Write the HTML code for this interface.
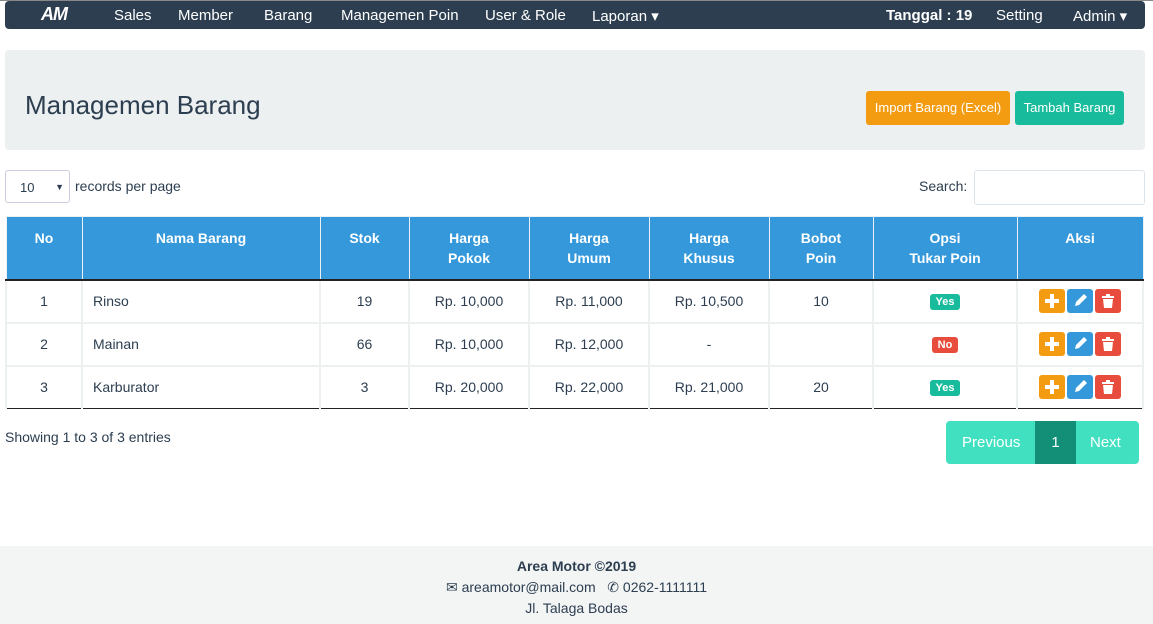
<!DOCTYPE html><html><head><style>
body{margin:0;width:1153px;height:624px;position:relative;font-family:"Liberation Sans",sans-serif;font-size:14px;color:#2c3e50;background:#fff;overflow:hidden}
.nav{position:absolute;left:5px;top:1px;width:1140px;height:28px;background:#2c3e50;border-radius:4px;color:#fff;font-size:15px}
.nav span{position:absolute;top:6px}
.jum{position:absolute;left:5px;top:50px;width:1140px;height:100px;background:#ecf0f1;border-radius:4px}
.btn{position:absolute;color:#fff;font-size:13px;text-align:center;line-height:34px;border-radius:3px;height:34px}
table{position:absolute;left:5px;top:216px;border-collapse:collapse;width:1139px}
th{background:#3498db;color:#fff;font-weight:bold;height:63px;vertical-align:top;padding-top:11px;box-sizing:border-box;line-height:20px;border:1px solid #ecf0f1;border-bottom:2px solid #222;font-size:14px}
td{height:43px;border:2px solid #ecf0f1;text-align:center;font-size:14px;padding:0;box-sizing:border-box}
tr:last-child td{border-bottom:1px solid #222}
.l{text-align:left;padding-left:10px}
.b{display:inline-block;color:#fff;font-size:11px;font-weight:bold;padding:2px 6px;border-radius:3px}
.ic{display:inline-block;width:26px;height:24px;border-radius:3px;margin:0 1px;vertical-align:middle;color:#fff;font-weight:bold;line-height:24px;font-size:18px}
.ic svg{display:block;margin:4px auto}
.foot{position:absolute;left:0;top:546px;width:1153px;height:78px;background:#f3f4f4;text-align:center;font-size:14px;line-height:21px;padding-top:10px;box-sizing:border-box}
</style></head><body>
<div style="position:absolute;left:0;top:0;width:1153px;height:1px;background:#888"></div>
<div class="nav">
<span style="left:36px;top:3px;font-weight:bold;font-style:italic;font-size:18px;letter-spacing:-1px">AM</span>
<span style="left:109px">Sales</span><span style="left:173px">Member</span><span style="left:259px">Barang</span><span style="left:336px">Managemen Poin</span><span style="left:480px">User &amp; Role</span><span style="left:587px">Laporan ▾</span>
<span style="left:881px;font-weight:bold">Tanggal : 19</span><span style="left:991px">Setting</span><span style="left:1068px">Admin ▾</span>
</div>
<div class="jum"><div style="position:absolute;left:20px;top:40px;font-size:26px">Managemen Barang</div>
<div class="btn" style="left:861px;top:41px;width:144px;background:#f39c12">Import Barang (Excel)</div>
<div class="btn" style="left:1010px;top:41px;width:109px;background:#18bc9c">Tambah Barang</div></div>
<div style="position:absolute;left:5px;top:170px;width:65px;height:33px;border:1px solid #ccd;border-radius:3px;font-size:13px;line-height:33px;box-sizing:border-box;padding-left:14px">10 <span style="position:absolute;right:5px;font-size:9px">▼</span></div>
<div style="position:absolute;left:75px;top:178px">records per page</div>
<div style="position:absolute;left:919px;top:178px">Search:</div>
<div style="position:absolute;left:974px;top:170px;width:171px;height:35px;border:1px solid #dce4ec;border-radius:3px;box-sizing:border-box"></div>
<table><tr><th style="width:76px">No</th><th style="width:238px">Nama Barang</th><th style="width:89px">Stok</th><th style="width:120px">Harga<br>Pokok</th><th style="width:120px">Harga<br>Umum</th><th style="width:120px">Harga<br>Khusus</th><th style="width:104px">Bobot<br>Poin</th><th style="width:144px">Opsi<br>Tukar Poin</th><th>Aksi</th></tr>
<tr><td>1</td><td class="l">Rinso</td><td>19</td><td>Rp. 10,000</td><td>Rp. 11,000</td><td>Rp. 10,500</td><td>10</td><td><span class="b" style="background:#18bc9c">Yes</span></td><td><span class="ic" style="background:#f39c12"><svg width="16" height="16"><path d="M6 1h4v5h5v4h-5v5H6v-5H1V6h5z" fill="#fff"/></svg></span><span class="ic" style="background:#3498db"><svg width="16" height="16"><path d="M3 13l1-4 8-8 3 3-8 8z" fill="#fff"/></svg></span><span class="ic" style="background:#e74c3c"><svg width="16" height="16"><path d="M2 3h12v2H2zM6 1h4v2H6zM3 6h10l-1 9H4z" fill="#fff"/></svg></span></td></tr>
<tr><td>2</td><td class="l">Mainan</td><td>66</td><td>Rp. 10,000</td><td>Rp. 12,000</td><td>-</td><td></td><td><span class="b" style="background:#e74c3c">No</span></td><td><span class="ic" style="background:#f39c12"><svg width="16" height="16"><path d="M6 1h4v5h5v4h-5v5H6v-5H1V6h5z" fill="#fff"/></svg></span><span class="ic" style="background:#3498db"><svg width="16" height="16"><path d="M3 13l1-4 8-8 3 3-8 8z" fill="#fff"/></svg></span><span class="ic" style="background:#e74c3c"><svg width="16" height="16"><path d="M2 3h12v2H2zM6 1h4v2H6zM3 6h10l-1 9H4z" fill="#fff"/></svg></span></td></tr>
<tr><td>3</td><td class="l">Karburator</td><td>3</td><td>Rp. 20,000</td><td>Rp. 22,000</td><td>Rp. 21,000</td><td>20</td><td><span class="b" style="background:#18bc9c">Yes</span></td><td><span class="ic" style="background:#f39c12"><svg width="16" height="16"><path d="M6 1h4v5h5v4h-5v5H6v-5H1V6h5z" fill="#fff"/></svg></span><span class="ic" style="background:#3498db"><svg width="16" height="16"><path d="M3 13l1-4 8-8 3 3-8 8z" fill="#fff"/></svg></span><span class="ic" style="background:#e74c3c"><svg width="16" height="16"><path d="M2 3h12v2H2zM6 1h4v2H6zM3 6h10l-1 9H4z" fill="#fff"/></svg></span></td></tr></table>
<div style="position:absolute;left:5px;top:429px">Showing 1 to 3 of 3 entries</div>
<div style="position:absolute;left:946px;top:421px;width:193px;height:43px;background:#40e0c0;border-radius:4px;color:#fff;font-size:15px;line-height:43px">
<span style="position:absolute;left:16px">Previous</span>
<span style="position:absolute;left:89px;width:41px;height:43px;background:#128f76;text-align:center">1</span>
<span style="position:absolute;left:144px">Next</span></div>
<div class="foot"><b>Area Motor ©2019</b><br>✉ areamotor@mail.com &nbsp; ✆ 0262-1111111<br>Jl. Talaga Bodas</div>
</body></html>
